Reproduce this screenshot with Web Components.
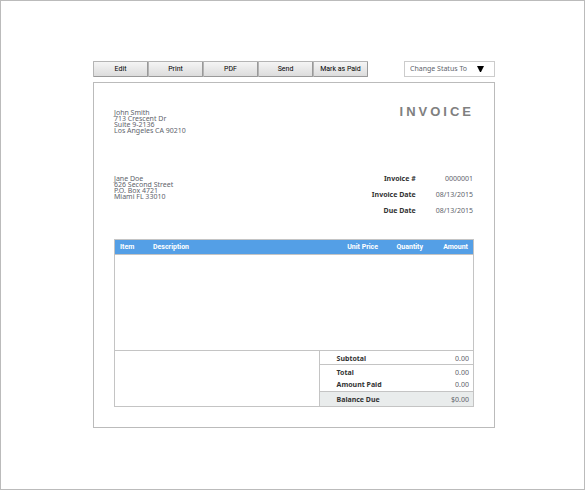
<!DOCTYPE html>
<html lang="en">
<head>
<meta charset="utf-8">
<meta name="viewport" content="width=device-width, initial-scale=1">
<title>Invoice</title>
<style>
  body {
    margin: 0;
    background: #fff;
    --line: #bbb;
    --inner-line: #c4c4c4;
    --accent: #549fe6;
    --text: #5e636b;
    --label: #333;
    --body-font: "Noto Sans", Tahoma, sans-serif;
    --ui-font: Roboto, Arial, sans-serif;
    font-family: var(--body-font);
    font-size: 7px;
    color: var(--text);
  }
</style>
</head>
<body>
<invoice-page>
  <action-bar slot="toolbar" actions="Edit,Print,PDF,Send,Mark as Paid"></action-bar>
  <status-select slot="toolbar" label="Change Status To"></status-select>
  <invoice-sheet heading="INVOICE">
    <address-block slot="from" lines="John Smith|713 Crescent Dr|Suite 9-2136|Los Angeles CA 90210"></address-block>
    <address-block slot="to" lines="Jane Doe|626 Second Street|P.O. Box 4721|Miami FL 33010"></address-block>
    <invoice-meta slot="meta" number="0000001" date="08/13/2015" due="08/13/2015"></invoice-meta>
    <line-items slot="items"></line-items>
    <invoice-totals slot="totals" subtotal="0.00" total="0.00" paid="0.00" balance="$0.00"></invoice-totals>
  </invoice-sheet>
</invoice-page>

<script>
"use strict";

class InvoicePage extends HTMLElement {
  constructor() {
    super();
    this.attachShadow({ mode: "open" });
  }

  connectedCallback() {
    this.shadowRoot.innerHTML = `
      <style>
        :host {
          display: block;
          box-sizing: border-box;
          min-height: 100vh;
          padding: 60px 89px 60px 92px;
          border: 1px solid var(--line);
        }
        header {
          display: flex;
          flex-wrap: wrap;
          justify-content: space-between;
          gap: 5px;
          margin-bottom: 5px;
        }
      </style>
      <header><slot name="toolbar"></slot></header>
      <main><slot></slot></main>
    `;
  }
}

class ActionBar extends HTMLElement {
  constructor() {
    super();
    this.attachShadow({ mode: "open" });
  }

  connectedCallback() {
    this.shadowRoot.innerHTML = `
      <style>
        :host {
          display: flex;
        }
        button {
          box-sizing: border-box;
          width: 55px;
          height: 16px;
          padding: 0;
          border: 1px solid #999;
          border-top-color: #b4b4b4;
          border-left-color: #b4b4b4;
          border-radius: 1px;
          background: linear-gradient(#f5f5f5, #dcdcdc);
          font: 7px/14px var(--ui-font);
          color: #000;
          cursor: pointer;
        }
        button:hover {
          background: #eee;
        }
      </style>
    `;
    this.getAttribute("actions").split(",").forEach((name) => {
      const button = document.createElement("button");
      button.type = "button";
      button.textContent = name;
      this.shadowRoot.appendChild(button);
    });
  }
}

class StatusSelect extends HTMLElement {
  constructor() {
    super();
    this.attachShadow({ mode: "open" });
  }

  connectedCallback() {
    const label = this.getAttribute("label");
    this.shadowRoot.innerHTML = `
      <style>
        :host {
          display: grid;
          width: 91px;
        }
        select,
        svg {
          grid-area: 1 / 1;
        }
        select {
          appearance: none;
          box-sizing: border-box;
          width: 100%;
          height: 16px;
          padding: 0 5px;
          border: 1px solid #ccc;
          border-radius: 0;
          background: #fff;
          font: 7px/14px var(--body-font);
          color: var(--text);
        }
        svg {
          place-self: center end;
          margin-right: 11px;
          pointer-events: none;
        }
      </style>
      <select aria-label="${label}">
        <option>${label}</option>
        <option>Draft</option>
        <option>Sent</option>
        <option>Paid</option>
      </select>
      <svg width="7" height="6" viewBox="0 0 7 6" aria-hidden="true"><path d="M0 0h7L4 6H3z"/></svg>
    `;
  }
}

class InvoiceSheet extends HTMLElement {
  constructor() {
    super();
    this.attachShadow({ mode: "open" });
  }

  connectedCallback() {
    this.shadowRoot.innerHTML = `
      <style>
        :host {
          display: block;
          padding: 20px;
          border: 1px solid var(--line);
        }
        .row {
          display: flex;
          justify-content: space-between;
          align-items: flex-start;
        }
        .top {
          min-height: 68px;
        }
        .from {
          display: block;
          padding-top: 7px;
        }
        .to {
          display: block;
          padding-top: 5px;
        }
        h1 {
          margin: 0;
          font: bold 13px/18px "Liberation Sans", Arial, sans-serif;
          letter-spacing: 3px;
          color: #808080;
        }
        .box {
          margin-top: 20px;
          border: 1px solid var(--inner-line);
        }
      </style>
      <div class="row top">
        <slot name="from" class="from"></slot>
        <h1>${this.getAttribute("heading")}</h1>
      </div>
      <div class="row">
        <slot name="to" class="to"></slot>
        <slot name="meta"></slot>
      </div>
      <div class="box">
        <slot name="items"></slot>
        <slot name="totals"></slot>
      </div>
    `;
  }
}

class AddressBlock extends HTMLElement {
  constructor() {
    super();
    this.attachShadow({ mode: "open" });
  }

  connectedCallback() {
    const lines = this.getAttribute("lines").split("|");
    this.shadowRoot.innerHTML = `
      <style>
        :host {
          display: block;
        }
        address {
          font-style: normal;
          line-height: 6px;
        }
      </style>
      <address>${lines.map((line) => `<div>${line}</div>`).join("")}</address>
    `;
  }
}

class InvoiceMeta extends HTMLElement {
  constructor() {
    super();
    this.attachShadow({ mode: "open" });
  }

  connectedCallback() {
    this.shadowRoot.innerHTML = `
      <style>
        :host {
          display: block;
        }
        dl {
          display: grid;
          grid-template-columns: auto auto;
          column-gap: 20px;
          margin: 0;
          padding-right: 1px;
          line-height: 16px;
          text-align: right;
        }
        dt {
          font-weight: bold;
          color: var(--label);
        }
        dd {
          margin: 0;
        }
      </style>
      <dl>
        <dt>Invoice #</dt><dd>${this.getAttribute("number")}</dd>
        <dt>Invoice Date</dt><dd>${this.getAttribute("date")}</dd>
        <dt>Due Date</dt><dd>${this.getAttribute("due")}</dd>
      </dl>
    `;
  }
}

class LineItems extends HTMLElement {
  constructor() {
    super();
    this.attachShadow({ mode: "open" });
  }

  connectedCallback() {
    this.shadowRoot.innerHTML = `
      <style>
        :host {
          display: block;
          min-height: 110px;
          border-bottom: 1px solid var(--inner-line);
        }
        table {
          width: 100%;
          border-collapse: collapse;
          table-layout: fixed;
        }
        th {
          height: 14px;
          padding: 0 5px;
          border-bottom: 1px solid var(--inner-line);
          background: var(--accent);
          font: bold 7px/14px var(--ui-font);
          color: #fff;
          text-align: right;
        }
        .item {
          width: 23px;
        }
        .price {
          width: 50px;
        }
        .quantity,
        .amount {
          width: 35px;
        }
        .item,
        .description {
          text-align: left;
        }
      </style>
      <table>
        <thead>
          <tr>
            <th class="item">Item</th>
            <th class="description">Description</th>
            <th class="price">Unit Price</th>
            <th class="quantity">Quantity</th>
            <th class="amount">Amount</th>
          </tr>
        </thead>
      </table>
    `;
  }
}

class InvoiceTotals extends HTMLElement {
  constructor() {
    super();
    this.attachShadow({ mode: "open" });
  }

  connectedCallback() {
    this.shadowRoot.innerHTML = `
      <style>
        :host {
          display: grid;
          grid-template-columns: 4fr 3fr;
        }
        .notes {
          border-right: 1px solid var(--inner-line);
        }
        table {
          width: 100%;
          border-spacing: 0;
        }
        th,
        td {
          padding: 3px 4px 0 17px;
          line-height: 10px;
        }
        th {
          color: var(--label);
          text-align: left;
        }
        td {
          text-align: right;
        }
        .subtotal > * {
          border-bottom: 1px solid var(--inner-line);
        }
        .paid > * {
          padding-top: 2px;
          padding-bottom: 1px;
        }
        .balance > * {
          padding-bottom: 1px;
          border-top: 1px solid var(--inner-line);
          background: #e9ecec;
        }
      </style>
      <div class="notes"></div>
      <table>
        <tr class="subtotal"><th scope="row">Subtotal</th><td>${this.getAttribute("subtotal")}</td></tr>
        <tr class="total"><th scope="row">Total</th><td>${this.getAttribute("total")}</td></tr>
        <tr class="paid"><th scope="row">Amount Paid</th><td>${this.getAttribute("paid")}</td></tr>
        <tr class="balance"><th scope="row">Balance Due</th><td>${this.getAttribute("balance")}</td></tr>
      </table>
    `;
  }
}

customElements.define("invoice-page", InvoicePage);
customElements.define("action-bar", ActionBar);
customElements.define("status-select", StatusSelect);
customElements.define("invoice-sheet", InvoiceSheet);
customElements.define("address-block", AddressBlock);
customElements.define("invoice-meta", InvoiceMeta);
customElements.define("line-items", LineItems);
customElements.define("invoice-totals", InvoiceTotals);
</script>
</body>
</html>
